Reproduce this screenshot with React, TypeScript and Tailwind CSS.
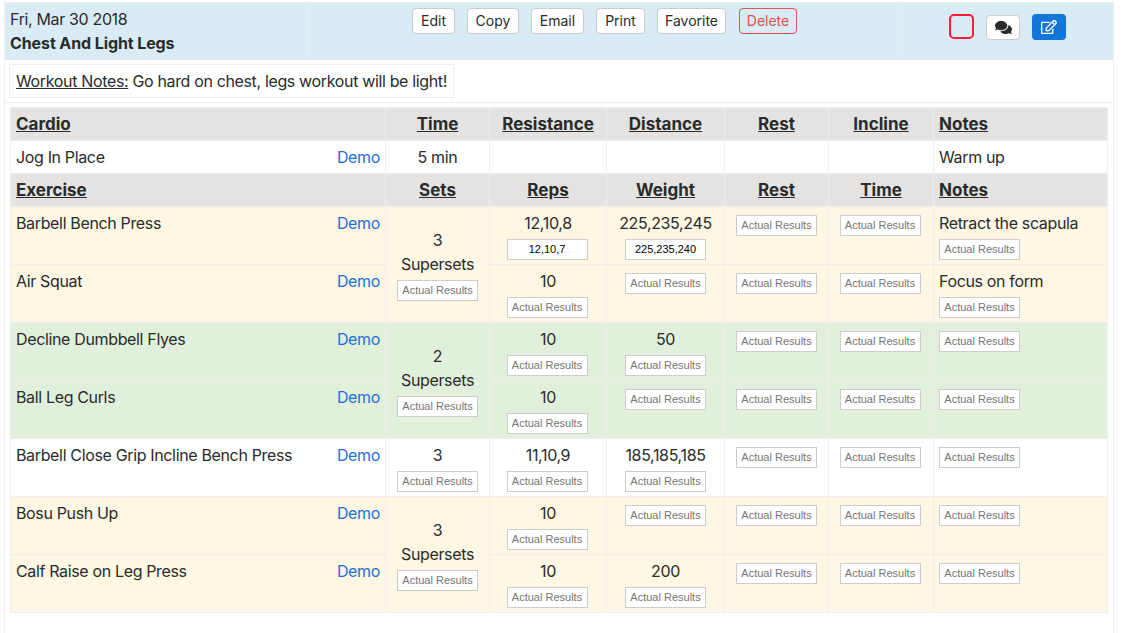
import { FaComments, FaRegEdit } from 'react-icons/fa';

type Row = {
  name: string;
  reps: string;
  repsActual?: string;
  weight?: string;
  weightActual?: string;
  note?: string;
  bg: string;
  sets?: { count: string; superset: boolean; span: number };
};

const rows: Row[] = [
  { name: 'Barbell Bench Press', reps: '12,10,8', repsActual: '12,10,7', weight: '225,235,245', weightActual: '225,235,240', note: 'Retract the scapula', bg: 'bg-[#fdf7e3]', sets: { count: '3', superset: true, span: 2 } },
  { name: 'Air Squat', reps: '10', note: 'Focus on form', bg: 'bg-[#fdf7e3]' },
  { name: 'Decline Dumbbell Flyes', reps: '10', weight: '50', bg: 'bg-[#e1f0db]', sets: { count: '2', superset: true, span: 2 } },
  { name: 'Ball Leg Curls', reps: '10', bg: 'bg-[#e1f0db]' },
  { name: 'Barbell Close Grip Incline Bench Press', reps: '11,10,9', weight: '185,185,185', bg: 'bg-white', sets: { count: '3', superset: false, span: 1 } },
  { name: 'Bosu Push Up', reps: '10', bg: 'bg-[#fdf7e3]', sets: { count: '3', superset: true, span: 2 } },
  { name: 'Calf Raise on Leg Press', reps: '10', weight: '200', bg: 'bg-[#fdf7e3]' },
];

const cell = 'border border-[#eceeef] align-top pl-[5px] pr-[5px]';
const head = 'border border-[#eceeef] bg-[#e4e3e1] h-[33px] px-[5px] py-0 text-[17px] font-bold tracking-normal';

function Actual({ value }: { value?: string }) {
  return (
    <div
      className={`mx-auto flex h-[21px] w-[81px] items-center justify-center border border-[#ccc] bg-white font-['Liberation_Sans'] text-[11px] leading-none tracking-normal ${
        value ? 'text-black' : 'text-[#757575]'
      }`}
    >
      {value ?? 'Actual Results'}
    </div>
  );
}

function Btn({ label, className = '' }: { label: string; className?: string }) {
  return (
    <button
      type="button"
      className={`h-[26px] rounded-[4px] border border-[#ccc] bg-white text-[14px] tracking-normal text-[#292b2c] ${className}`}
    >
      {label}
    </button>
  );
}

export default function App() {
  return (
    <div
      className="ml-[4px] mr-[10px] h-[633px] overflow-hidden border-x border-[#eceeef] pt-[2px] text-[16px] leading-[24px] tracking-[-0.35px] text-[#292b2c]"
      style={{ fontFamily: 'Inter, "Liberation Sans", sans-serif' }}
    >
      {/* Workout header */}
      <div className="flex h-[58px] border-t border-[#eceeef] bg-[#d9ebf5]">
        <div className="w-[304px] border-r border-[#e4edf2] pl-[5px] pt-[4px]">
          <div>Fri, Mar 30 2018</div>
          <div className="font-bold tracking-[-0.1px]">Chest And Light Legs</div>
        </div>
        <div className="flex w-[593px] items-start border-r border-[#e4edf2] pl-[103px] pt-[5px]">
          <Btn label="Edit" className="w-[43px]" />
          <Btn label="Copy" className="ml-[12px] w-[52px]" />
          <Btn label="Email" className="ml-[12px] w-[53px]" />
          <Btn label="Print" className="ml-[12px] w-[49px]" />
          <Btn label="Favorite" className="ml-[12px] w-[69px]" />
          <button
            type="button"
            className="ml-[13px] h-[26px] w-[58px] rounded-[4px] border border-[#d9534f] bg-transparent pb-[3px] text-[14px] tracking-normal text-[#d9534f]"
          >
            Delete
          </button>
        </div>
        <div className="flex flex-1 items-start pl-[47px] pt-[11px]">
          <div className="h-[25px] w-[25px] rounded-[5px] border-2 border-[#ff1a33]" />
          <button
            type="button"
            className="ml-[12px] mt-[1px] flex h-[25px] w-[34px] items-center justify-center rounded-[4px] border border-[#ccc] bg-white text-[#292b2c]"
          >
            <FaComments size={17} />
          </button>
          <button
            type="button"
            className="ml-[12px] flex h-[26px] w-[34px] items-center justify-center rounded-[4px] bg-[#1275d8] text-white"
          >
            <FaRegEdit size={16} />
          </button>
        </div>
      </div>

      {/* Notes */}
      <div className="h-[43px] border-b border-[#eceeef] pl-[4px] pt-[4px]">
        <div className="inline-block h-[34px] w-[445px] border border-[#eceeef] pl-[6px] pt-[4px]">
          <span className="underline">Workout Notes:</span> Go hard on chest, legs workout will be light!
        </div>
      </div>

      <table className="ml-[5px] mt-[4px] w-[1097px] table-fixed border-collapse">
        <colgroup>
          <col className="w-[375px]" />
          <col className="w-[104px]" />
          <col className="w-[117px]" />
          <col className="w-[118px]" />
          <col className="w-[104px]" />
          <col className="w-[105px]" />
          <col className="w-[174px]" />
        </colgroup>
        <tbody>
          <tr>
            <td className={head}><span className="underline">Cardio</span></td>
            {['Time', 'Resistance', 'Distance', 'Rest', 'Incline'].map((h) => (
              <td key={h} className={`${head} text-center`}><span className="underline">{h}</span></td>
            ))}
            <td className={head}><span className="underline">Notes</span></td>
          </tr>
          <tr className="h-[33px]">
            <td className="border border-[#eceeef] px-[5px] py-0">
              <div className="flex justify-between">
                <span>Jog In Place</span>
                <span className="text-[#1f6fd8]">Demo</span>
              </div>
            </td>
            <td className="border border-[#eceeef] px-[5px] py-0 text-center">5 min</td>
            <td className="border border-[#eceeef]" />
            <td className="border border-[#eceeef]" />
            <td className="border border-[#eceeef]" />
            <td className="border border-[#eceeef]" />
            <td className="border border-[#eceeef] px-[5px] py-0">Warm up</td>
          </tr>
          <tr>
            <td className={head}><span className="underline">Exercise</span></td>
            {['Sets', 'Reps', 'Weight', 'Rest', 'Time'].map((h) => (
              <td key={h} className={`${head} text-center`}><span className="underline">{h}</span></td>
            ))}
            <td className={head}><span className="underline">Notes</span></td>
          </tr>
          {rows.map((r) => (
            <tr key={r.name} className={`h-[58px] ${r.bg}`}>
              <td className={`${cell} pt-[4px]`}>
                <div className="flex justify-between">
                  <span>{r.name}</span>
                  <span className="text-[#1f6fd8]">Demo</span>
                </div>
              </td>
              {r.sets && (
                <td rowSpan={r.sets.span} className="border border-[#eceeef] px-[5px] text-center align-middle">
                  <div>{r.sets.count}</div>
                  {r.sets.superset && <div>Supersets</div>}
                  <div className="mt-[4px]"><Actual /></div>
                </td>
              )}
              <td className={`${cell} pt-[4px] text-center`}>
                <div>{r.reps}</div>
                <div className="mt-[4px] -translate-x-[1px]"><Actual value={r.repsActual} /></div>
              </td>
              <td className={`${cell} pt-[4px] text-center`}>
                {r.weight && <div>{r.weight}</div>}
                <div className="mt-[4px]"><Actual value={r.weightActual} /></div>
              </td>
              <td className={`${cell} pt-[8px]`}><Actual /></td>
              <td className={`${cell} pt-[8px]`}><div className="-translate-x-[1px]"><Actual /></div></td>
              <td className={`${cell} pt-[4px]`}>
                {r.note && <div>{r.note}</div>}
                <div className="mt-[4px] w-[81px]"><Actual /></div>
              </td>
            </tr>
          ))}
        </tbody>
      </table>
    </div>
  );
}
